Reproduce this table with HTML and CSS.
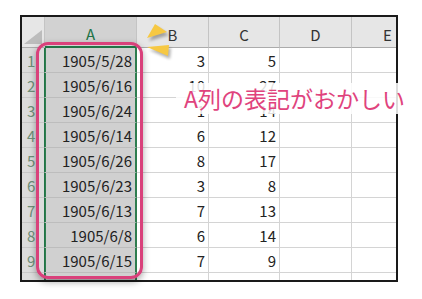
FILE: index.html
```html
<!DOCTYPE html>
<html lang="ja">
<head>
<meta charset="utf-8">
<link rel="stylesheet" href="styles.css">
</head>
<body>
<div class="page">
  <div class="frame">
    <div class="sheet">
      <div class="hd corner"><span class="tri"></span></div>
      <div class="hd hd-a">A</div>
      <div class="hd">B</div>
      <div class="hd">C</div>
      <div class="hd">D</div>
      <div class="hd">E</div>

      <div class="rh">1</div><div class="c a">1905/5/28</div><div class="c">3</div><div class="c">5</div><div class="c"></div><div class="c"></div>
      <div class="rh">2</div><div class="c a">1905/6/16</div><div class="c">10</div><div class="c">27</div><div class="c"></div><div class="c"></div>
      <div class="rh">3</div><div class="c a">1905/6/24</div><div class="c">1</div><div class="c">14</div><div class="c"></div><div class="c"></div>
      <div class="rh">4</div><div class="c a">1905/6/14</div><div class="c">6</div><div class="c">12</div><div class="c"></div><div class="c"></div>
      <div class="rh">5</div><div class="c a">1905/6/26</div><div class="c">8</div><div class="c">17</div><div class="c"></div><div class="c"></div>
      <div class="rh">6</div><div class="c a">1905/6/23</div><div class="c">3</div><div class="c">8</div><div class="c"></div><div class="c"></div>
      <div class="rh">7</div><div class="c a">1905/6/13</div><div class="c">7</div><div class="c">13</div><div class="c"></div><div class="c"></div>
      <div class="rh">8</div><div class="c a">1905/6/8</div><div class="c">6</div><div class="c">14</div><div class="c"></div><div class="c"></div>
      <div class="rh">9</div><div class="c a">1905/6/15</div><div class="c">7</div><div class="c">9</div><div class="c"></div><div class="c"></div>
      <div class="rh">10</div><div class="c a">1905/6/21</div><div class="c">8</div><div class="c">22</div><div class="c"></div><div class="c"></div>
    </div>
  </div>

  <div class="highlight"></div>

  <svg class="sparkle" width="44" height="44" viewBox="0 0 44 44">
    <defs>
      <filter id="blur" x="-50%" y="-50%" width="200%" height="200%">
        <feGaussianBlur stdDeviation="1.6"/>
      </filter>
    </defs>
    <g fill="#000" opacity="0.3" filter="url(#blur)" transform="translate(2 3)">
      <polygon points="7,18 15,4 27,12"/>
      <polygon points="7,27 29,25 28,36"/>
    </g>
    <polygon points="7,18 15,4 27,12" fill="#f6c843"/>
    <polygon points="7,27 29,25 28,36" fill="#f6c843"/>
  </svg>

  <div class="callout">A列の表記がおかしい</div>
</div>
</body>
</html>
```

FILE: styles.css
```css
html, body {
  margin: 0;
  padding: 0;
  background: #ffffff;
}

.page {
  position: relative;
  width: 422px;
  height: 299px;
  padding: 15px 0 0 20px;
  box-sizing: border-box;
  font-family: "Noto Sans CJK JP", "Noto Sans", sans-serif;
}

.frame {
  width: 378px;
  height: 267px;
  border: 2px solid #1a1a1a;
  box-sizing: border-box;
  overflow: hidden;
  background: #ffffff;
}

.sheet {
  display: grid;
  grid-template-columns: 23px 92px 72px 71px 72px 72px;
  grid-template-rows: 31px repeat(10, 25px);
  width: 402px;
}

.hd {
  background: #e6e6e6;
  border-right: 1px solid #c4c4c4;
  border-bottom: 1px solid #ababab;
  box-sizing: border-box;
  display: flex;
  align-items: center;
  justify-content: center;
  padding-top: 4px;
  font-size: 15px;
  color: #333333;
}

.corner {
  position: relative;
  padding: 0;
}

.tri {
  position: absolute;
  right: 2px;
  bottom: 3px;
  width: 18px;
  height: 14px;
  background: #bcbcbc;
  clip-path: polygon(100% 0, 100% 100%, 0 100%);
}

.hd-a {
  background: #d2d2d2;
  color: #217346;
  border-bottom: 2px solid #217346;
}

.rh {
  background: #dcdcdc;
  color: #6f8f78;
  border-right: 1px solid #217346;
  border-bottom: 1px solid #c8c8c8;
  box-sizing: border-box;
  font-size: 15px;
  display: flex;
  align-items: center;
  padding-left: 5px;
  padding-top: 1px;
}

.c {
  border-right: 1px solid #d4d4d4;
  border-bottom: 1px solid #d4d4d4;
  box-sizing: border-box;
  display: flex;
  align-items: center;
  justify-content: flex-end;
  padding: 1px 3px 0 0;
  font-size: 15px;
  color: #222222;
}

.c.a {
  background: #d0d0d0;
  border-bottom-color: #bdbdbd;
  border-right: 2px solid #2e7d4f;
  box-shadow: inset 1px 0 0 #2e7d4f;
  padding-right: 3px;
}

.highlight {
  position: absolute;
  left: 36px;
  top: 42px;
  width: 107px;
  height: 237px;
  border: 3px solid #d9417b;
  border-radius: 12px;
  box-sizing: border-box;
  box-shadow: 0 3px 7px rgba(0, 0, 0, 0.35);
}

.sparkle {
  position: absolute;
  left: 140px;
  top: 20px;
}

.callout {
  position: absolute;
  left: 176px;
  top: 83px;
  padding: 0 7px 0 8px;
  background: rgba(255, 255, 255, 0.85);
  color: #e0437d;
  font-size: 23px;
  line-height: 31px;
  white-space: nowrap;
}
```
